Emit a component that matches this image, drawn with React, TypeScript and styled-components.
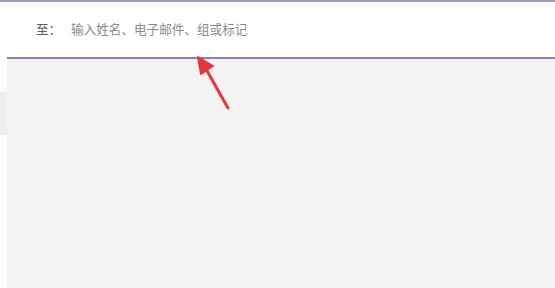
import React from 'react';
import styled, { createGlobalStyle } from 'styled-components';

const GlobalStyle = createGlobalStyle`
  html, body {
    margin: 0;
    padding: 0;
    background: #ffffff;
    font-family: "Noto Sans CJK SC", "Noto Sans", sans-serif;
  }
`;

const Page = styled.div`
  position: relative;
  width: 555px;
  height: 288px;
  overflow: hidden;
  display: flex;
  flex-direction: column;
  border-top: 2px solid #9d9cc1;
  box-sizing: border-box;
`;

const Body = styled.div`
  flex: 1;
  display: flex;
`;

const Rail = styled.div`
  width: 7px;
  background: #fdfdfd;
  padding-top: 90px;
  box-sizing: border-box;
`;

const RailItem = styled.div`
  height: 43px;
  background: #efeeed;
`;

const Main = styled.div`
  flex: 1;
  display: flex;
  flex-direction: column;
`;

const ToBar = styled.div`
  height: 53px;
  background: #ffffff;
  border-bottom: 2px solid #8583b1;
  display: flex;
  align-items: center;
  padding: 0 0 2px 29px;
  box-sizing: content-box;
`;

const ToLabel = styled.span`
  font-size: 12.6px;
  color: #5c5c5c;
  width: 35px;
`;

const ToInput = styled.input`
  border: none;
  outline: none;
  background: transparent;
  font-family: inherit;
  font-size: 12.6px;
  color: #333;
  width: 300px;
  padding: 0;
  &::placeholder {
    color: #8a8a8a;
  }
`;

const Content = styled.div`
  flex: 1;
  background: #f4f3f2;
`;

const Arrow = styled.svg`
  position: absolute;
  left: 190px;
  top: 47px;
`;

export default function App() {
  return (
    <>
      <GlobalStyle />
      <Page>
        <Body>
          <Rail>
            <RailItem />
          </Rail>
          <Main>
            <ToBar>
              <ToLabel>至：</ToLabel>
              <ToInput placeholder="输入姓名、电子邮件、组或标记" />
            </ToBar>
            <Content />
          </Main>
        </Body>
        <Arrow width="50" height="70" viewBox="0 0 50 70">
          <line x1="38" y1="59" x2="16" y2="20" stroke="#e8353d" strokeWidth="3" strokeLinecap="round" />
          <polygon points="8,8 23,17 11,25" fill="#e8353d" stroke="#e8353d" strokeWidth="2" strokeLinejoin="round" />
        </Arrow>
      </Page>
    </>
  );
}
